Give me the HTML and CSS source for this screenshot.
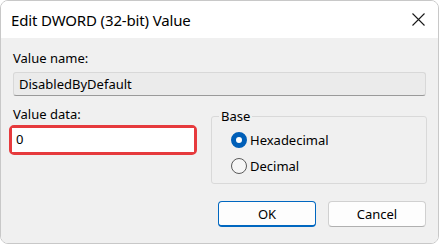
FILE: index.html
```html
<!DOCTYPE html>
<html lang="en">
<head>
    <meta charset="UTF-8">
    <title>Edit DWORD (32-bit) Value</title>
    <link rel="stylesheet" href="styles.css">
</head>
<body>
    <div class="dialog">
        <div class="titlebar">
            <span class="title">Edit DWORD (32-bit) Value</span>
            <svg class="close" width="13" height="13" viewBox="0 0 13 13">
                <path d="M0.5 0.5 L12.5 12.5 M12.5 0.5 L0.5 12.5" stroke="#1a1a1a" stroke-width="1.1" fill="none"/>
            </svg>
        </div>
        <div class="content">
            <div class="label">Value name:</div>
            <div class="field readonly">DisabledByDefault</div>
            <div class="row">
                <div class="data-col">
                    <div class="label">Value data:</div>
                    <div class="highlight">
                        <div class="field edit">0</div>
                    </div>
                </div>
                <fieldset class="base-group">
                    <legend>Base</legend>
                    <label class="radio"><span class="dot checked"></span>Hexadecimal</label>
                    <label class="radio"><span class="dot"></span>Decimal</label>
                </fieldset>
            </div>
            <div class="buttons">
                <button class="btn default">OK</button>
                <button class="btn">Cancel</button>
            </div>
        </div>
    </div>
</body>
</html>
```

FILE: styles.css
```css
body {
    margin: 0;
    background-color: #fff;
    font-family: "Noto Sans", "Open Sans", sans-serif;
    color: #000;
}
.dialog {
    width: 439px;
    height: 244px;
    border: 1px solid #c8c8c8;
    border-radius: 8px;
    overflow: hidden;
    display: flex;
    flex-direction: column;
    box-sizing: border-box;
}
.titlebar {
    height: 37px;
    flex-shrink: 0;
    background-color: #fff;
    display: flex;
    align-items: center;
    justify-content: space-between;
    padding: 0 13px 0 10px;
}
.title {
    font-size: 15px;
    letter-spacing: -0.15px;
    line-height: 20px;
    margin-top: 1px;
}
.content {
    flex: 1;
    background-color: #f0f0f0;
    padding: 11px 11px 0 12px;
    font-size: 13px;
}
.label {
    height: 18px;
    line-height: 18px;
    margin-bottom: 5px;
}
.field {
    height: 24px;
    line-height: 22px;
    box-sizing: border-box;
    padding: 0 5px;
}
.field.readonly {
    margin-right: 1px;
    background-color: #ebebeb;
    border: 1px solid #d8d8d8;
    border-bottom-color: #9a9a9a;
    border-radius: 3px;
}
.row {
    display: grid;
    grid-template-columns: 184px 216px;
    column-gap: 14px;
    margin-top: 9px;
}
.data-col {
    margin-left: -4px;
}
.data-col .label {
    margin-left: 4px;
    margin-bottom: 2px;
}
.highlight {
    width: 188px;
    box-sizing: border-box;
    border: 3px solid #e63a3d;
    border-radius: 5px;
}
.field.edit {
    background-color: #fff;
    height: 24px;
    padding-left: 4px;
}
.base-group {
    margin: 2px 0 0;
    border: 1px solid #d9d9d9;
    border-radius: 3px;
    padding: 2px 10px 0 19px;
    height: 77px;
    box-sizing: border-box;
}
.base-group legend {
    padding: 0 2px;
    margin-left: -12px;
    line-height: 18px;
}
.radio {
    display: flex;
    align-items: center;
    height: 26px;
}
.dot {
    width: 14px;
    height: 14px;
    border: 1px solid #5a5a5a;
    border-radius: 50%;
    margin-right: 3px;
    background-color: #f6f6f6;
    box-sizing: content-box;
}
.dot.checked {
    border: 5px solid #005fb8;
    width: 6px;
    height: 6px;
    background-color: #fff;
}
.buttons {
    display: flex;
    justify-content: flex-end;
    gap: 12px;
    margin-top: 17px;
    padding-right: 1px;
}
.btn {
    width: 98px;
    height: 26px;
    font-family: inherit;
    font-size: 13px;
    color: #000;
    background-color: #fdfdfd;
    border: 1px solid #d0d0d0;
    border-bottom-color: #b0b0b0;
    border-radius: 4px;
}
.btn.default {
    border: 1px solid #0067c0;
    border-bottom-width: 2px;
}
```
